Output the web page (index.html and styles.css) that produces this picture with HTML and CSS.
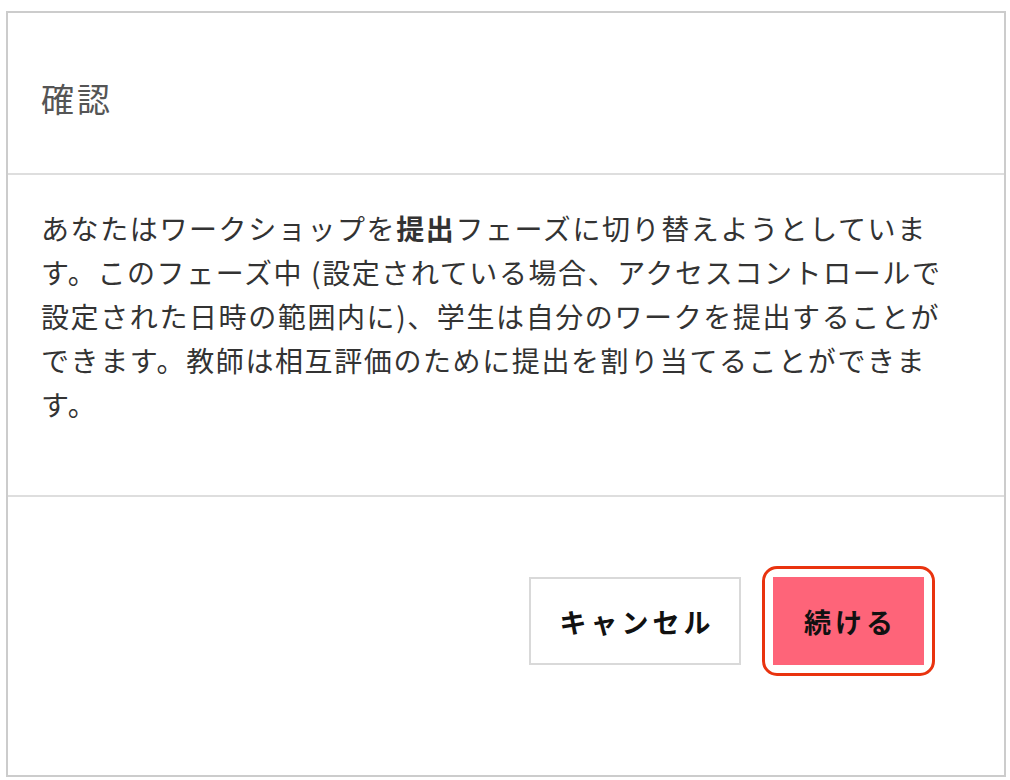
FILE: index.html
```html
<!DOCTYPE html>
<html lang="ja">
<head>
<meta charset="utf-8">
<title>確認</title>
<link rel="stylesheet" href="styles.css">
</head>
<body>
<div class="dialog">
  <div class="dialog-header">
    <h2 class="dialog-title">確認</h2>
  </div>
  <div class="dialog-body">
    <p class="dialog-text">あなたはワークショップを<strong>提出</strong>フェーズに切り替えようとしています。このフェーズ中 (設定されている場合、アクセスコントロールで設定された日時の範囲内に)、学生は自分のワークを提出することができます。教師は相互評価のために提出を割り当てることができます。</p>
  </div>
  <div class="dialog-footer">
    <button class="btn btn-cancel" type="button">キャンセル</button>
    <button class="btn btn-primary" type="button">続ける</button>
  </div>
</div>
</body>
</html>
```

FILE: styles.css
```css
html, body {
  margin: 0;
  padding: 0;
  background: #ffffff;
}

body {
  padding: 11px 4px 3px 6px;
  font-family: "Noto Sans CJK JP", "Noto Sans", sans-serif;
}

.dialog {
  width: 1000px;
  height: 766px;
  box-sizing: border-box;
  border: 2px solid #cccccc;
  display: flex;
  flex-direction: column;
  background: #ffffff;
}

.dialog-header {
  height: 162px;
  box-sizing: border-box;
  border-bottom: 2px solid #dedede;
  display: flex;
  align-items: center;
  padding: 12px 33px 0 33px;
}

.dialog-title {
  margin: 0;
  font-size: 33px;
  font-weight: 400;
  letter-spacing: 3px;
  color: #555555;
  line-height: 1.2;
}

.dialog-body {
  height: 322px;
  box-sizing: border-box;
  border-bottom: 2px solid #dedede;
  padding: 31px 56px 0 33px;
}

.dialog-text {
  margin: 0;
  font-size: 28px;
  letter-spacing: 1.6px;
  line-height: 44px;
  color: #333333;
}

.dialog-text strong {
  font-weight: 700;
}

.dialog-footer {
  flex: 1;
  display: flex;
  justify-content: flex-end;
  align-items: flex-start;
  gap: 32px;
  padding: 80px 80px 0 0;
}

.btn {
  height: 88px;
  box-sizing: border-box;
  padding: 0;
  font-family: "Noto Sans CJK JP", "Noto Sans", sans-serif;
  font-size: 27px;
  font-weight: 700;
  letter-spacing: 4px;
  text-indent: 4px;
  color: #111111;
  cursor: pointer;
  position: relative;
}

.btn-cancel {
  width: 212px;
  background: #ffffff;
  border: 2px solid #d9d9d9;
}

.btn-primary {
  width: 151px;
  background: #fe6479;
  border: none;
}

.btn-primary::after {
  content: "";
  position: absolute;
  top: -11px;
  left: -11px;
  right: -11px;
  bottom: -11px;
  border: 3px solid #e9330f;
  border-radius: 15px;
  pointer-events: none;
}
```
